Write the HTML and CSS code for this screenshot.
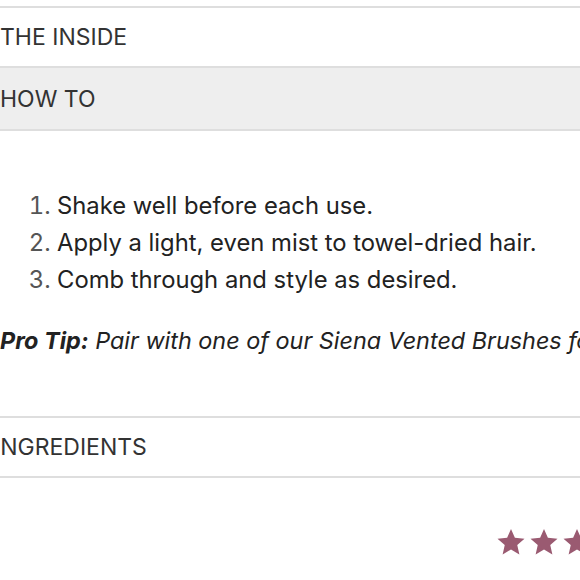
FILE: index.html
```html
<!DOCTYPE html>
<html lang="en">
<head>
    <meta charset="UTF-8">
    <meta name="viewport" content="width=device-width, initial-scale=1.0">
    <title>Product details</title>
    <link rel="stylesheet" href="styles.css">
</head>
<body>
    <div class="details">
        <div class="acc-item">
            <button class="acc-head">THE INSIDE</button>
        </div>
        <div class="acc-item open">
            <button class="acc-head">HOW TO</button>
            <div class="acc-body">
                <ol class="steps">
                    <li>Shake well before each use.</li>
                    <li>Apply a light, even mist to towel-dried hair.</li>
                    <li>Comb through and style as desired.</li>
                </ol>
                <p class="tip"><strong>Pro Tip:</strong> Pair with one of our Siena Vented Brushes for a smooth blowout.</p>
            </div>
        </div>
        <div class="acc-item">
            <button class="acc-head acc-head-cut">INGREDIENTS</button>
        </div>
        <div class="rating">
            <svg class="star" viewBox="0 0 24 24"><path d="M12 1.5l3.1 7.1 7.7.7-5.8 5.1 1.7 7.6L12 18l-6.7 4 1.7-7.6-5.8-5.1 7.7-.7z"/></svg>
            <svg class="star" viewBox="0 0 24 24"><path d="M12 1.5l3.1 7.1 7.7.7-5.8 5.1 1.7 7.6L12 18l-6.7 4 1.7-7.6-5.8-5.1 7.7-.7z"/></svg>
            <svg class="star" viewBox="0 0 24 24"><path d="M12 1.5l3.1 7.1 7.7.7-5.8 5.1 1.7 7.6L12 18l-6.7 4 1.7-7.6-5.8-5.1 7.7-.7z"/></svg>
            <svg class="star" viewBox="0 0 24 24"><path d="M12 1.5l3.1 7.1 7.7.7-5.8 5.1 1.7 7.6L12 18l-6.7 4 1.7-7.6-5.8-5.1 7.7-.7z"/></svg>
            <svg class="star" viewBox="0 0 24 24"><path d="M12 1.5l3.1 7.1 7.7.7-5.8 5.1 1.7 7.6L12 18l-6.7 4 1.7-7.6-5.8-5.1 7.7-.7z"/></svg>
        </div>
    </div>
</body>
</html>
```

FILE: styles.css
```css
body { margin: 0; padding: 0; background: #fff; overflow: hidden; font-family: "DejaVu Sans", sans-serif; }
.details { padding-top: 6px; width: 760px; }
.acc-item { border-bottom: 2px solid #dedede; }
.acc-item:first-child { border-top: 2px solid #dedede; }
.acc-head { display: block; width: 100%; height: 58px; border: 0; background: #fff; padding: 0; text-align: left; font-family: Inter, sans-serif; font-size: 23px; font-weight: 400; color: #333; cursor: pointer; }
.open .acc-head { background: #eeeeee; border-bottom: 2px solid #dedede; height: 63px; }
.acc-head-cut { text-indent: -6px; }
.acc-body { padding: 56px 0 61px 0; }
.steps { margin: 0; padding-left: 57px; font-family: Inter, sans-serif; font-size: 23.8px; line-height: 37px; color: #222; }
.steps li::marker { color: #555; }
.tip { margin: 28px 0 0 0; font-family: Inter, sans-serif; font-size: 23.4px; font-style: italic; color: #222; white-space: nowrap; }
.tip strong { font-weight: 700; }
.rating { padding: 49px 0 0 496px; display: flex; gap: 3px; }
.star { width: 30px; height: 30px; fill: #9a5a71; flex: none; }
```
